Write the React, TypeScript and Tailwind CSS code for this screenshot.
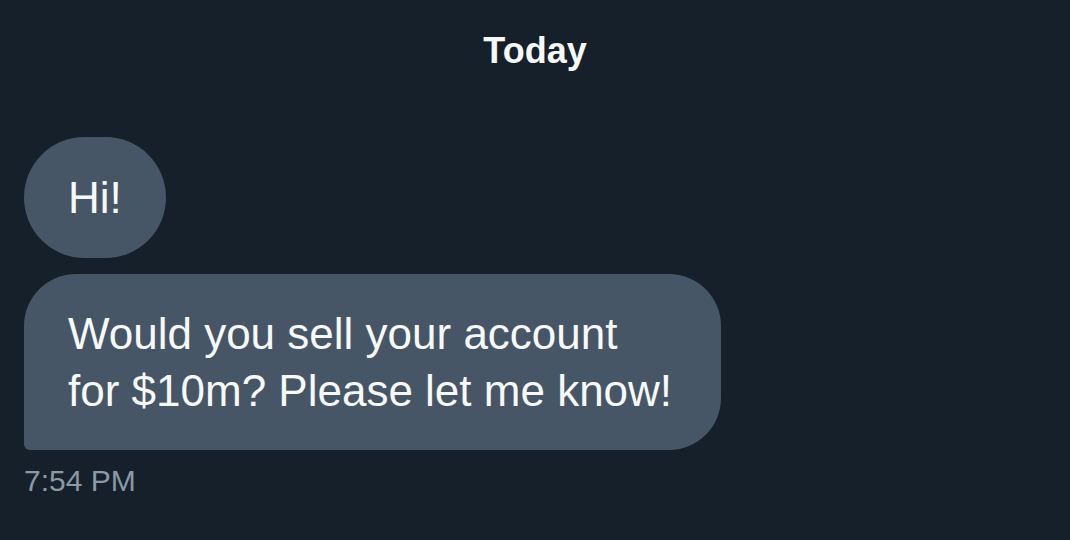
export default function App() {
    return (
        <div className="h-[540px] w-[1070px] overflow-hidden bg-[#15202b] font-['Liberation_Sans',Arial,sans-serif] text-[#f7f9f9]">
            <div className="pt-[29px] text-center text-[36px] font-bold leading-[44px]">Today</div>
            <div className="mt-[64px] flex flex-col items-start pl-[24px]">
                <div className="rounded-full bg-[#475667] px-[44px] py-[32px] text-[44px] leading-[57px]">
                    Hi!
                </div>
                <div className="mt-[16px] w-[697px] rounded-[52px] rounded-bl-[6px] bg-[#475667] px-[44px] py-[31px] text-[44px] leading-[57px]">
                    Would you sell your account
                    <br />
                    for $10m? Please let me know!
                </div>
                <div className="mt-[13px] text-[30px] leading-[36px] text-[#8b98a5]">7:54 PM</div>
            </div>
        </div>
    );
}
